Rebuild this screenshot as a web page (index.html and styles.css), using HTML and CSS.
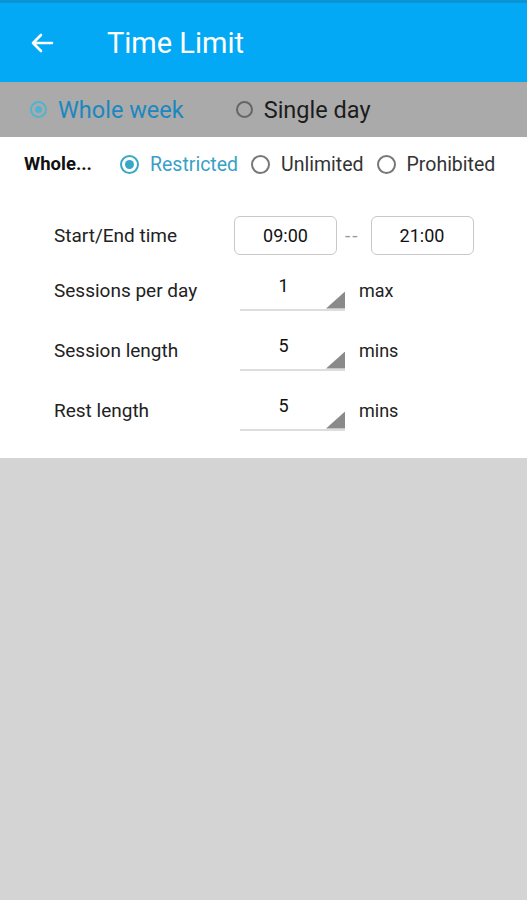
FILE: index.html
```html
<!DOCTYPE html>
<html lang="en">
<head>
    <meta charset="UTF-8">
    <meta name="viewport" content="width=device-width, initial-scale=1.0">
    <title>Time Limit</title>
    <link rel="stylesheet" href="styles.css">
</head>
<body>

<div class="appbar">
    <svg class="back" width="24" height="20" viewBox="0 0 24 20">
        <path d="M22 10H3M11 2L3 10l8 8" fill="none" stroke="#fff" stroke-width="2.6" stroke-linecap="round" stroke-linejoin="round"/>
    </svg>
    <span class="title">Time Limit</span>
</div>

<div class="tabs">
    <div class="tab tab-on"><span class="radio radio-on"></span>Whole week</div>
    <div class="tab"><span class="radio"></span>Single day</div>
</div>

<div class="panel">
    <div class="mode">
        <span class="mode-label">Whole...</span>
        <div class="choice choice-on"><span class="radio radio-on"></span>Restricted</div>
        <div class="choice"><span class="radio"></span>Unlimited</div>
        <div class="choice"><span class="radio"></span>Prohibited</div>
    </div>

    <div class="settings">
        <div class="row row-time">
            <span class="label">Start/End time</span>
            <div class="times">
                <div class="timebox">09:00</div>
                <span class="dash">--</span>
                <div class="timebox">21:00</div>
            </div>
        </div>
        <div class="row">
            <span class="label">Sessions per day</span>
            <div class="field">
                <div class="spinner">1</div>
                <span class="unit">max</span>
            </div>
        </div>
        <div class="row">
            <span class="label">Session length</span>
            <div class="field">
                <div class="spinner">5</div>
                <span class="unit">mins</span>
            </div>
        </div>
        <div class="row">
            <span class="label">Rest length</span>
            <div class="field">
                <div class="spinner">5</div>
                <span class="unit">mins</span>
            </div>
        </div>
    </div>
</div>

</body>
</html>
```

FILE: styles.css
```css
body {
    background-color: #d4d4d4;
    font-family: 'Roboto', 'Liberation Sans', sans-serif;
    margin: 0;
    padding: 0;
}

.appbar {
    display: flex;
    align-items: center;
    height: 79px;
    background-color: #03a9f4;
    border-top: 3px solid #0894d6;
}

.back {
    margin-left: 30px;
    margin-top: 1px;
}

.title {
    margin-left: 53px;
    color: #fff;
    font-size: 29px;
}

.tabs {
    display: flex;
    align-items: center;
    height: 55px;
    padding-left: 30px;
    background-color: #aaaaaa;
}

.tab {
    display: flex;
    align-items: center;
    gap: 11px;
    font-size: 23.5px;
    color: #1c1c1c;
    margin-right: 52px;
}

.tab-on {
    color: #1b87c0;
}

.tab .radio {
    width: 13px;
    height: 13px;
    border-color: #666;
}

.tab .radio-on {
    border-color: #52b3cf;
}

.tab .radio-on::after {
    width: 7px;
    height: 7px;
    background-color: #52b3cf;
}

.radio {
    display: inline-flex;
    align-items: center;
    justify-content: center;
    box-sizing: content-box;
    width: 15px;
    height: 15px;
    border: 2px solid #777;
    border-radius: 50%;
}

.radio-on {
    border-color: #3aa7c9;
}

.radio-on::after {
    content: '';
    width: 9px;
    height: 9px;
    border-radius: 50%;
    background-color: #3aa7c9;
}

.panel {
    background-color: #fff;
    padding-bottom: 18px;
}

.mode {
    display: flex;
    align-items: center;
    height: 54px;
    padding-left: 24px;
    font-size: 19.5px;
    color: #333;
}

.mode-label {
    font-size: 18.5px;
    font-weight: bold;
    color: #111;
    width: 96px;
}

.choice {
    display: flex;
    align-items: center;
    gap: 11px;
    margin-right: 13px;
}

.choice-on {
    color: #3a9fc8;
}

.settings {
    padding-top: 25px;
    padding-left: 54px;
}

.row {
    display: flex;
    align-items: center;
    height: 60px;
    font-size: 19px;
    color: #222;
}

.row-time {
    height: 39px;
    margin-bottom: 5px;
}

.label {
    width: 180px;
}

.times {
    display: flex;
    align-items: center;
}

.timebox {
    display: flex;
    align-items: center;
    justify-content: center;
    width: 101px;
    height: 37px;
    border: 1px solid #c8c8c8;
    border-radius: 6px;
    font-size: 18px;
    color: #111;
}

.dash {
    color: #999;
    margin: 0 11px 0 8px;
    letter-spacing: 2px;
}

.field {
    display: flex;
    align-items: center;
    margin-left: 6px;
}

.spinner {
    position: relative;
    box-sizing: border-box;
    width: 105px;
    height: 39px;
    padding-right: 18px;
    line-height: 28px;
    text-align: center;
    font-size: 18px;
    color: #111;
    border-bottom: 2px solid #ddd;
    margin-top: 2px;
}

.spinner::after {
    content: '';
    position: absolute;
    right: 0;
    bottom: 0;
    width: 19px;
    height: 17px;
    background-color: #8a8a8a;
    clip-path: polygon(100% 0, 100% 100%, 0 100%);
}

.unit {
    margin-left: 14px;
    font-size: 18px;
}
```
